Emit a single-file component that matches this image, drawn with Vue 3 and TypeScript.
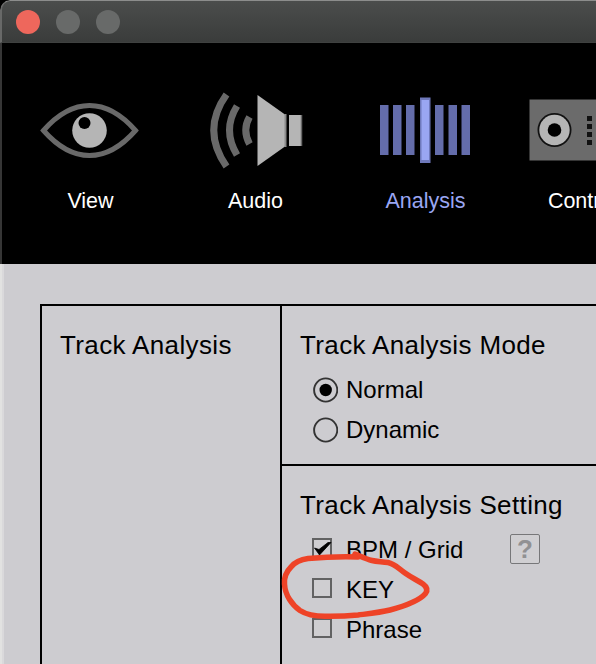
<script setup lang="ts">
import { ref } from 'vue'

type TabId = 'view' | 'audio' | 'analysis' | 'controller'

const tabs: { id: TabId; label: string }[] = [
  { id: 'view', label: 'View' },
  { id: 'audio', label: 'Audio' },
  { id: 'analysis', label: 'Analysis' },
  { id: 'controller', label: 'Controller' },
]
const activeTab = ref<TabId>('analysis')

const modes = ['Normal', 'Dynamic']
const mode = ref('Normal')

const settings = ref([
  { label: 'BPM / Grid', checked: true, help: true },
  { label: 'KEY', checked: false, help: false },
  { label: 'Phrase', checked: false, help: false },
])

const bars = [0, 13, 26, 55, 68.5, 81.5]
const dots = [36, 44, 52, 60]
</script>

<template>
  <div class="backdrop">
    <div class="window">
      <header class="titlebar">
        <span class="light close"></span>
        <span class="light"></span>
        <span class="light"></span>
      </header>

      <nav class="toolbar">
        <button
          v-for="tab in tabs"
          :key="tab.id"
          class="tab"
          :class="{ active: tab.id === activeTab }"
          @click="activeTab = tab.id"
        >
          <svg v-if="tab.id === 'view'" class="icon" width="100" height="100" viewBox="0 0 100 100">
            <path
              d="M3.5 50.500C18 34 33 25.500 49.500 25.500S81 34 95.500 50.500C81 67 66 75.500 49.500 75.500S18 67 3.500 50.500Z"
              fill="none" stroke="#696969" stroke-width="5"
            />
            <circle cx="49.500" cy="50.500" r="17.300" fill="#b5b5b5" />
            <circle cx="44.500" cy="43" r="6" fill="#000" />
          </svg>
          <svg v-else-if="tab.id === 'audio'" class="icon" width="100" height="100" viewBox="0 0 100 100">
            <g fill="none" stroke="#696969" stroke-width="7">
              <path d="M21.500 14.500Q-4 50 21.500 86.500" />
              <path d="M32 26Q17 50 32 75" />
              <path d="M44.500 37Q37 50 44.500 64" />
            </g>
            <path d="M52.500 15L80 34.500V66.500L52.500 86Z" fill="#b5b5b5" />
            <path d="M80.500 34V67" stroke="#8a8a8a" stroke-width="2" />
            <rect x="84" y="35" width="12" height="31" fill="#b5b5b5" />
            <path d="M96.500 35V66" stroke="#696969" stroke-width="1.500" />
          </svg>
          <svg v-else-if="tab.id === 'analysis'" class="icon" width="100" height="100" viewBox="0 0 100 100">
            <rect v-for="x in bars" :key="x" :x="x + 5" y="25" width="8.500" height="50" fill="#646dab" />
            <rect x="45" y="17.500" width="10.500" height="65.500" fill="#6f79bb" />
            <rect x="46.500" y="20" width="7.500" height="60" fill="#9aa6f2" />
          </svg>
          <svg v-else class="icon" width="130" height="100" viewBox="0 0 130 100">
            <rect x="0.500" y="19.500" width="129" height="61" fill="#6b6b6b" />
            <circle cx="25.500" cy="50" r="17" fill="#111" />
            <circle cx="25.500" cy="50" r="15.200" fill="#b5b5b5" />
            <circle cx="25.500" cy="50" r="6.800" fill="#000" />
            <rect v-for="y in dots" :key="y" x="58" :y="y" width="5" height="5" fill="#111" />
            <circle cx="104" cy="50" r="16" fill="#b5b5b5" />
            <circle cx="104" cy="50" r="6.800" fill="#000" />
          </svg>
          <span class="tab-label">{{ tab.label }}</span>
        </button>
      </nav>

      <main class="content">
        <div class="panel">
          <section class="category">
            <h2>Track Analysis</h2>
          </section>
          <div class="options">
            <section class="group mode">
              <h2>Track Analysis Mode</h2>
              <div
                v-for="name in modes"
                :key="name"
                class="row"
                role="radio"
                :aria-checked="mode === name"
                @click="mode = name"
              >
                <svg width="26" height="26" viewBox="0 0 26 26">
                  <circle cx="13.700" cy="13" r="11.600" fill="none" stroke="#333" stroke-width="1.900" />
                  <circle v-if="mode === name" cx="13.700" cy="13" r="6.200" fill="#000" />
                </svg>
                <span class="radio-label">{{ name }}</span>
              </div>
            </section>
            <section class="group">
              <h2>Track Analysis Setting</h2>
              <div
                v-for="item in settings"
                :key="item.label"
                class="row"
                role="checkbox"
                :aria-checked="item.checked"
                @click="item.checked = !item.checked"
              >
                <svg class="box" width="20" height="20" viewBox="0 0 20 20">
                  <rect x="1" y="1" width="18" height="18" fill="#cfced1" stroke="#626263" stroke-width="2" />
                  <path
                    v-if="item.checked"
                    d="M2.500 10L7 11.500L16 4.500L19 4.500L7.500 17Z"
                    fill="#000"
                    stroke="#000"
                    stroke-width="0.800"
                  />
                </svg>
                <span class="check-label">{{ item.label }}</span>
                <span v-if="item.help" class="help">?</span>
              </div>
            </section>
          </div>
        </div>
      </main>
    </div>

    <svg class="marker" width="150" height="66" viewBox="0 0 150 66">
      <path
        d="M78 3C60 2.500 45 3 28 4.500C20 5.500 15 8 11 13C6 18 4 24 4.500 30C5 41 12 51 20 56.500C27 61 34 62.300 45 62.300C57 62.500 68 62 78 61C90 59.500 100 58.500 110 56C125 52 140 46 145.500 39.500C148 36 147 33 143 30C137 26 132 24 125 19C118 14 115 10 108 8.500C102 7.500 97 7.700 92 6.500C86 5 81 2.500 75 0"
        fill="none"
      />
    </svg>
  </div>
</template>

<style>
body {
  margin: 0;
  overflow: hidden;
}
</style>

<style scoped>
.backdrop {
  position: relative;
  width: 596px;
  height: 664px;
  overflow: hidden;
  background: #000;
  font-family: 'Liberation Sans', Arial, sans-serif;
}
.window {
  display: flex;
  flex-direction: column;
  width: 720px;
  height: 664px;
  box-sizing: border-box;
  border-radius: 10px 0 0 0;
  overflow: hidden;
  background: #000;
}
.titlebar {
  display: flex;
  flex: none;
  align-items: center;
  gap: 16px;
  height: 43px;
  box-sizing: border-box;
  padding: 1px 0 0 14px;
  border-top: 1px solid #8c8d8c;
  border-left: 2px solid #686968;
  border-bottom: 1px solid #3f4140;
  border-radius: 10px 0 0 0;
  background: linear-gradient(#4b4d4c, #3a3c3b);
}
.light {
  width: 24px;
  height: 24px;
  border-radius: 50%;
  background: #686a69;
}
.light.close {
  background: #ee675c;
}
.toolbar {
  display: grid;
  flex: none;
  grid-template-columns: 164px 166px 174px 164px;
  height: 221px;
  box-sizing: border-box;
  padding: 37px 0 0 6px;
  border-left: 2px solid #363636;
  background: #000;
}
.tab {
  display: flex;
  flex-direction: column;
  align-items: center;
  padding: 0;
  border: 0;
  background: none;
  color: #fff;
  font: 21.500px/26px 'Liberation Sans', Arial, sans-serif;
}
.tab.active {
  color: #9aa6f2;
}
.icon {
  flex: none;
}
.tab-label {
  margin: 8px 0 0 1px;
}
.content {
  flex: 1;
  min-height: 0;
  box-sizing: border-box;
  padding: 40px 0 0 38px;
  border-left: 2px solid #e2e2e1;
  background: #cdccd0;
  box-shadow: inset 2px 0 #dad9db;
}
.panel {
  display: grid;
  grid-template-columns: 238px 1fr;
  height: 400px;
  border: 2px solid #000;
  color: #000;
}
.category {
  padding: 24px 18px;
}
.options {
  border-left: 2px solid #000;
}
.group {
  box-sizing: border-box;
  padding: 24px 18px 0;
}
.group.mode {
  height: 160px;
  border-bottom: 2px solid #000;
}
h2 {
  margin: 0;
  font-size: 26px;
  font-weight: 400;
  line-height: 30px;
  letter-spacing: 0.370px;
  white-space: nowrap;
}
.row {
  display: flex;
  align-items: center;
  height: 40px;
  padding-left: 12px;
  font-size: 24px;
  line-height: 28px;
}
.group h2 {
  margin-bottom: 10px;
}
.row svg {
  flex: none;
}
.row .box {
  margin-top: -4px;
}
.radio-label {
  margin-left: 8px;
}
.check-label {
  width: 164px;
  margin-left: 14px;
}
.help {
  width: 30px;
  height: 30px;
  box-sizing: border-box;
  margin-top: -2px;
  border: 1.500px solid #777779;
  border-radius: 2px;
  background: #d0cfd2;
  color: #919193;
  font-size: 26px;
  font-weight: 700;
  line-height: 29px;
  text-align: center;
}
.marker {
  position: absolute;
  left: 280px;
  top: 554px;
  overflow: visible;
  pointer-events: none;
}
.marker path {
  stroke: #ee4327;
  stroke-width: 5.500;
  stroke-linecap: round;
  stroke-linejoin: round;
}
</style>
